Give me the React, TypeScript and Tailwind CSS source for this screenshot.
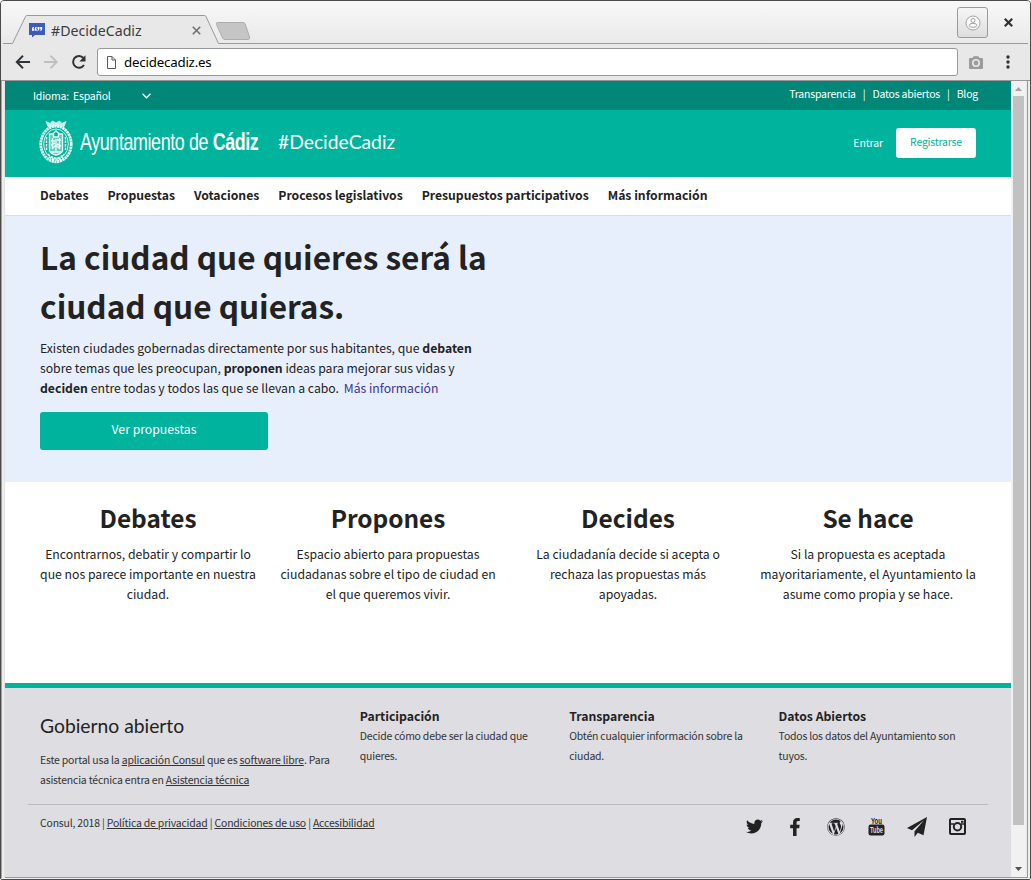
import React from "react";
import { FaTwitter, FaFacebookF, FaWordpress } from "react-icons/fa";

const sans = "font-['Noto_Sans_CJK_SC',sans-serif]";

function TitleBar() {
  return (
    <div className="relative flex h-[43px] shrink-0 items-start justify-between bg-gradient-to-b from-[#f8f8f8] to-[#e9e9e9]">
      <svg className="absolute left-0 top-0" width="1029" height="43" viewBox="1 1 1029 43" fill="none">
        <path d="M1 43.500H12.500L25.500 16.500Q26 15.500 27 15.500H204.500Q205.500 15.500 206 16.500L218.500 43.500H1030V45H1Z" fill="#e8e8e8" />
        <path d="M3 43.500H12.500L25.500 16.500Q26 15.500 27 15.500H204.500Q205.500 15.500 206 16.500L218.500 43.500H1028" stroke="#989998" />
        <path d="M217.500 22.500H243Q244.500 22.500 245.200 24L249.500 37Q250 39.500 248 39.500H225Q223.500 39.500 222.500 38L216.500 24.500Q215.800 22.500 217.500 22.500Z" fill="#c5c5c5" stroke="#adadad" />
      </svg>
      <div className="relative flex items-center pl-[28px] pt-[16px]">
        <svg width="16" height="16" viewBox="0 0 16 16">
          <path d="M0 1H16V13H6L3 15.500V13H0Z" fill="#3b5bbd" />
          <path d="M3 8.800V6.800Q3 5 5 4.800V5.800Q4.300 6 4.300 6.700H5V8.800ZM5.700 8.800V6.800Q5.700 5 7.700 4.800V5.800Q7 6 7 6.700H7.700V8.800ZM10.500 5V7Q10.500 8.700 8.500 9V8Q9.200 7.800 9.200 7.100H8.500V5ZM13.200 5V7Q13.200 8.700 11.200 9V8Q11.900 7.800 11.900 7.100H11.200V5Z" fill="#fff" />
        </svg>
        <span className="ml-1.5 w-[141px] pt-[2px] text-[14.200px] leading-6 text-[#3c3c3c] font-['Noto_Sans',sans-serif]">#DecideCadiz</span>
        <svg width="9" height="9" viewBox="0 0 9 9" stroke="#6f6f6f" strokeWidth="1.600"><path d="M.8.8L8.200 8.200M8.200.8L.8 8.200" /></svg>
      </div>
      <div className="relative flex items-center gap-4 pr-[17px] pt-[6px]">
        <div className="flex h-[31px] w-[31px] items-center justify-center rounded-[3px] border border-[#9a9a9a] bg-gradient-to-b from-[#f6f6f6] to-[#dedede]">
          <svg width="16" height="16" viewBox="0 0 16 16" fill="none" stroke="#a2a2a2">
            <circle cx="8" cy="8" r="7" fill="#f9f9f9" /><circle cx="8" cy="5.500" r="2" /><ellipse cx="8" cy="10.300" rx="3.800" ry="2" />
          </svg>
        </div>
        <svg width="9" height="9" viewBox="0 0 9 9" stroke="#2e3436" strokeWidth="2.200"><path d="M.8.8L8.200 8.200M8.200.8L.8 8.200" /></svg>
      </div>
    </div>
  );
}

function Toolbar() {
  return (
    <div className="flex h-[37px] shrink-0 items-center border-b border-[#989898] bg-[#e8e8e8] pl-[14px] pr-[10px]">
      <svg width="76" height="18" viewBox="0 0 76 18" fill="none" strokeWidth="2">
        <path d="M15 9H2M8 2.800L1.800 9L8 15.200" stroke="#2f3436" />
        <path d="M29 9H42M35.500 2.800L41.700 9L35.500 15.200" stroke="#c0c0c0" />
        <path d="M69 12A5.900 5.900 0 1 1 68.500 5" stroke="#2f3436" /><path d="M70.500 2.300V8.500H64.300Z" fill="#2f3436" />
      </svg>
      <div className="ml-[6px] flex h-[28px] w-[861px] items-center rounded-[3px] border border-[#989898] bg-white pl-[9px]">
        <svg width="9" height="13" viewBox="0 0 9 13" fill="none" stroke="#5c5c5c"><path d="M.5.5H5L8.500 4V12.500H.5ZM5 .5V4H8.500" /></svg>
        <span className="ml-[8px] pt-px text-[13.300px] tracking-[-0.200px] text-black font-['Noto_Sans',sans-serif]">decidecadiz.es</span>
      </div>
      <svg className="ml-[11px]" width="14" height="13" viewBox="0 0 14 13"><path d="M1 2H3.500L4.500 .3H9.500L10.500 2H13Q14 2 14 3V12Q14 13 13 13H1Q0 13 0 12V3Q0 2 1 2Z" fill="#9b9b9b" /><circle cx="7" cy="7" r="3.200" fill="#9b9b9b" stroke="#e8e8e8" strokeWidth="1.600" /></svg>
      <svg className="ml-[23px]" width="4" height="14" viewBox="0 0 4 14" fill="#2f3436"><circle cx="2" cy="2" r="1.700" /><circle cx="2" cy="7" r="1.700" /><circle cx="2" cy="12" r="1.700" /></svg>
    </div>
  );
}

function Crest() {
  return (
    <svg width="36" height="44" viewBox="0 0 36 44" fill="none" stroke="#e9faf6">
      <path d="M8 1.500L12 3.500L14.500 1L18 3L21.500 1L24 3.500L28 1.500L26 6.500Q18 4.500 10 6.500Z" fill="#c5eee6" strokeWidth=".8" />
      <ellipse cx="18" cy="24" rx="15.200" ry="17.800" strokeWidth="2.800" strokeDasharray="2.300 .5" />
      <ellipse cx="18" cy="24" rx="12.300" ry="15" strokeWidth=".9" />
      <path d="M11.500 14H15.500V17H20.500V14H24.500V31Q23 34 18 35Q13 34 11.500 31Z" fill="#58cbbb" strokeWidth="1.400" />
      <path d="M14.500 18V28M18 19V32M21.500 18V28M13 21H17M19 20H23M13 25L17 23M19 24L23 26M14 29L18 25L22 29M13 32H23M15 13.500L18 11L21 13.500" strokeWidth="1.400" />
      <path d="M8.500 17V31M27.500 17V31M10 34Q18 42 26 34M11 37Q18 43 25 37" strokeWidth="1.500" strokeDasharray="2.500 1" />
    </svg>
  );
}

function Header() {
  return (
    <header className="text-white">
      <div className="flex h-[29px] justify-between bg-[#008777] pl-7 pr-8 text-[10.480px] leading-[30px] tracking-[-0.200px]">
        <div className="flex items-center">
          <span className="w-[40px]">Idioma:</span><span className="w-[69px]">Español</span>
          <svg width="9" height="6" viewBox="0 0 9 6" fill="none" stroke="#fff" strokeWidth="1.500"><path d="M.5.8L4.500 4.800L8.500.8" /></svg>
        </div>
        <nav className="flex pr-px leading-[26px]"><span>Transparencia</span><span className="mx-[7px]">|</span><span>Datos abiertos</span><span className="mx-[7px]">|</span><span>Blog</span></nav>
      </div>
      <div className="flex h-[67px] items-center bg-[#00b39d] pb-px pl-[33px] pr-[35px]">
        <div className="pb-[2px]"><Crest /></div>
        <div className="ml-[6px] w-[178px] pb-[2px]">
          <div className="origin-left scale-x-[.745] whitespace-nowrap pb-px text-[24px] leading-7 tracking-[-0.520px] font-['Liberation_Sans',sans-serif]">Ayuntamiento de <b>Cádiz</b></div>
        </div>
        <span className="ml-5 pb-[3px] text-[19.300px] leading-6 font-['Lato',sans-serif]">#DecideCadiz</span>
        <span className="ml-auto text-[10.480px] tracking-[-0.100px]">Entrar</span>
        <button className="ml-[13px] h-[30px] w-20 rounded-[3px] bg-white pb-[2px] text-[10.480px] tracking-[-0.200px] text-[#00b39d]">Registrarse</button>
      </div>
      <nav className="flex h-[39px] items-center gap-[19px] border-b border-[#dcdde2] bg-white pb-[2px] pl-[35px] text-[12.200px] font-bold text-[#222]">
        <span>Debates</span><span>Propuestas</span><span>Votaciones</span><span>Procesos legislativos</span><span>Presupuestos participativos</span><span>Más información</span>
      </nav>
    </header>
  );
}

function Hero() {
  return (
    <section className="h-[266px] bg-[#e7effd] pl-[35px] pt-[16px] text-[#222]">
      <h1 className="text-[31.560px] font-bold leading-[49px]">La ciudad que quieres será la<br />ciudad que quieras.</h1>
      <p className="mt-[8px] text-[12.220px] leading-5">
        Existen ciudades gobernadas directamente por sus habitantes, que <b>debaten</b><br />
        sobre temas que les preocupan, <b>proponen</b> ideas para mejorar sus vidas y<br />
        <b>deciden</b> entre todas y todos las que se llevan a cabo. <a className="ml-[2px] text-[#3d3494]">Más información</a>
      </p>
      <button className="mt-[14px] block h-[38px] w-[228px] rounded-[3px] bg-[#00b39d] pb-[3px] text-[12.240px] text-white">Ver propuestas</button>
    </section>
  );
}

const steps: { title: string; lines: string[] }[] = [
  { title: "Debates", lines: ["Encontrarnos, debatir y compartir lo", "que nos parece importante en nuestra", "ciudad."] },
  { title: "Propones", lines: ["Espacio abierto para propuestas", "ciudadanas sobre el tipo de ciudad en", "el que queremos vivir."] },
  { title: "Decides", lines: ["La ciudadanía decide si acepta o", "rechaza las propuestas más", "apoyadas."] },
  { title: "Se hace", lines: ["Si la propuesta es aceptada", "mayoritariamente, el Ayuntamiento la", "asume como propia y se hace."] },
];

function Steps() {
  return (
    <section className="grid h-[201px] grid-cols-[repeat(4,240px)] bg-white pl-[23px] pt-[18px] text-center text-[#222]">
      {steps.map((s) => (
        <div key={s.title}>
          <h2 className="text-[24.400px] font-bold leading-9">{s.title}</h2>
          <p className="mt-[8px] text-[12.220px] leading-5">{s.lines.map((l) => <span key={l} className="block whitespace-nowrap">{l}</span>)}</p>
        </div>
      ))}
    </section>
  );
}

const links = [
  { title: "Participación", lines: ["Decide cómo debe ser la ciudad que", "quieres."] },
  { title: "Transparencia", lines: ["Obtén cualquier información sobre la", "ciudad."] },
  { title: "Datos Abiertos", lines: ["Todos los datos del Ayuntamiento son", "tuyos."] },
];

function YouTubeIcon() {
  return (
    <svg className="overflow-visible" width="17" height="20" viewBox="0 0 17 20" fill="#222">
      <text x="8.500" y="7.500" textAnchor="middle" textLength="11" lengthAdjust="spacingAndGlyphs" fontFamily="Liberation Sans" fontSize="9" fontWeight="bold" letterSpacing="0">You</text>
      <rect x=".5" y="8.500" width="16" height="11" rx="2.200" />
      <text x="8.500" y="17.400" textAnchor="middle" textLength="13" lengthAdjust="spacingAndGlyphs" fontFamily="Liberation Sans" fontSize="9" fontWeight="bold" letterSpacing="0" fill="#dedde2">Tube</text>
    </svg>
  );
}

function Footer() {
  return (
    <footer className="flex-1 border-t-[5px] border-[#00b39d] bg-[#dedde2] pl-[23px] text-[10.480px] leading-5 tracking-[-0.220px] text-[#333]">
      <div className="flex h-[117px] w-[960px] border-b border-[#bbbabd] pl-3">
        <div className="w-[320px] pt-[24px]">
          <h3 className="text-[19.300px] leading-[27px] tracking-normal text-[#222] font-['Lato',sans-serif]">Gobierno abierto</h3>
          <p className="mt-[11px] whitespace-nowrap tracking-[-0.190px]">Este portal usa la <u>aplicación Consul</u> que es <u>software libre</u>. Para<br />asistencia técnica entra en <u>Asistencia técnica</u></p>
        </div>
        {links.map((c) => (
          <div key={c.title} className="w-[209.500px] whitespace-nowrap pt-[18px]">
            <h4 className="text-[12.220px] font-bold tracking-normal text-[#222]">{c.title}</h4>
            {c.lines.map((l) => <p key={l}>{l}</p>)}
          </div>
        ))}
      </div>
      <div className="flex w-[960px] justify-between pl-3 pr-[22px] pt-2">
        <p className="tracking-[-0.195px]">Consul, 2018 | <u>Política de privacidad</u> | <u>Condiciones de uso</u> | <u>Accesibilidad</u></p>
        <div className="flex items-center pt-[3px] text-[#222]">
          <FaTwitter size={17} /><FaFacebookF size={18} className="ml-[23px]" /><FaWordpress size={18} className="ml-[23px]" />
          <span className="ml-[23px] block h-[21px]"><YouTubeIcon /></span>
          <svg className="ml-[22px]" width="20" height="20" viewBox="0 0 20 20" fill="#222"><path d="M20 0L0 11L5 13.200L17 3.200L7.500 14.300V20L10.800 15.800L16.500 18.300Z" /></svg>
          <svg className="ml-[22px]" width="17" height="17" viewBox="0 0 17 17" fill="none" stroke="#222"><rect x="1" y="1" width="15" height="15" rx="1" strokeWidth="2" /><path d="M1 6H5M12 6H16" strokeWidth="1.500" /><circle cx="8.500" cy="8.700" r="3.700" strokeWidth="2" /><path d="M12 3.800H14.500" strokeWidth="2" /></svg>
        </div>
      </div>
    </footer>
  );
}

function Scrollbar() {
  return (
    <div className="flex w-[15px] shrink-0 flex-col items-center justify-between bg-[#f1f1f1] pb-[6px] pt-[6px]">
      <svg width="7" height="4" viewBox="0 0 7 4" fill="#a3a3a3"><path d="M3.500 0L7 4H0Z" /></svg>
      <div className="mb-auto mt-[5px] h-[729px] w-[11px] bg-[#c1c1c1]" />
      <svg width="7" height="4" viewBox="0 0 7 4" fill="#505050"><path d="M3.500 4L7 0H0Z" /></svg>
    </div>
  );
}

export default function App() {
  return (
    <div className={`h-[880px] w-[1031px] bg-white ${sans}`}>
      <div className="flex h-full flex-col overflow-hidden rounded-t-[4px] rounded-b-[2px] border border-[#4a4a4a] bg-[#e8e8e8]">
        <TitleBar />
        <Toolbar />
        <div className="flex min-h-0 flex-1 border-b border-[#ededed]">
          <div className="w-[4px] shrink-0 border-x border-[#a5a09e] border-r-[#e3e3e3] bg-[#ededed]" />
          <div className="flex min-w-0 flex-1 border-b border-[#999]">
            <main className="flex w-[1006px] shrink-0 flex-col">
              <Header />
              <Hero />
              <Steps />
              <Footer />
            </main>
            <Scrollbar />
          </div>
          <div className="w-[3px] shrink-0 border-l border-[#999] bg-[#ededed]" />
        </div>
      </div>
    </div>
  );
}
